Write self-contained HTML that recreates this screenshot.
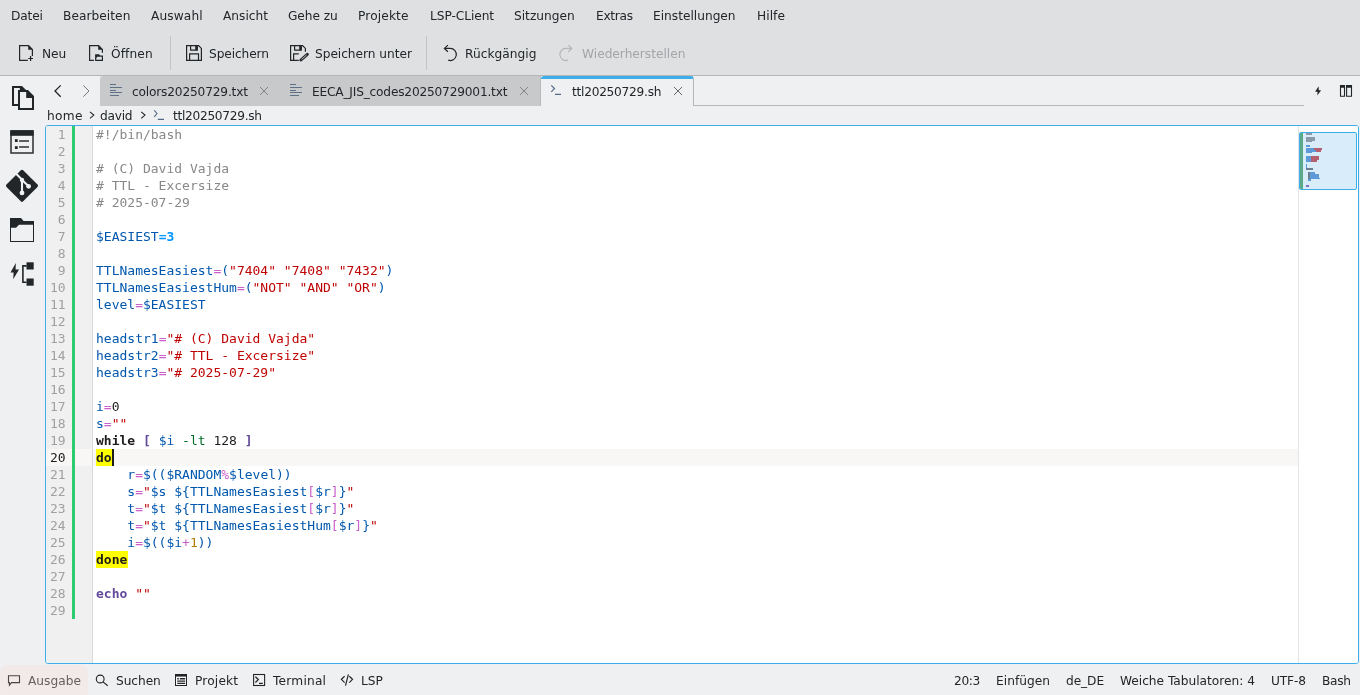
<!DOCTYPE html>
<html lang="de"><head><meta charset="utf-8"><title>ttl20250729.sh — Kate</title>
<style>
*{box-sizing:border-box;margin:0;padding:0}
html,body{width:1360px;height:695px;overflow:hidden;background:#eff0f1;font-family:"DejaVu Sans", "Liberation Sans", sans-serif;font-size:12.2px;color:#232629}
#top{position:absolute;left:0;top:0;width:1360px;height:75px;background:#dee0e2}
#topline{position:absolute;left:0;top:75px;width:1360px;height:1px;background:#b3b5b7}
.u{will-change:transform;position:absolute;white-space:pre;line-height:20px;height:20px;color:#232629}
.u.dis{color:#a3a5a7}
.u.dim{color:#66625f}
.sep{position:absolute;width:1px;background:#c2c4c6}
#tab1{position:absolute;left:100px;top:76px;width:441px;height:30px;background:#c8c9cb;border-top-left-radius:3px;border-right:1px solid #b9babc}
#tabact{position:absolute;left:541px;top:76px;width:153px;height:30px;background:#eff0f1;border-top:3px solid #3daee9;border-right:1px solid #b4b6b8;border-top-left-radius:3px;border-top-right-radius:3px}
#tabline{position:absolute;left:693px;top:105px;width:611px;height:1px;background:#b4b6b8}
#ed{position:absolute;left:45px;top:125px;width:1314px;height:539px;border:1px solid #3daee9;border-radius:3px;background:#fff;overflow:hidden}
#gut{position:absolute;left:0;top:0;width:46px;height:100%;background:#f0f0f0}
#curln{position:absolute;left:0;top:323px;width:1252px;height:17px;background:#f8f7f6}
#gsep{position:absolute;left:46px;top:0;width:1px;height:100%;background:#d5d5d5;opacity:.9}
#saved{position:absolute;left:26px;top:0;width:3px;height:493px;background:#2ecc71}
.hl{position:absolute;background:#ffff00;height:17px;left:50px}
#lines{will-change:transform;position:absolute;left:0;top:0;width:1252px}
.ln{position:relative;height:17px;line-height:17px;font-family:"DejaVu Sans Mono", "Liberation Mono", monospace;font-size:13px;white-space:pre}
.no{position:absolute;left:0;width:19.7px;text-align:right;color:#a0a0a0}
.ln.cur .no{color:#1e1e1e}
.tx{position:absolute;left:50px;height:17px;color:#1f1c1b}
.c{color:#898887}.v{color:#0057ae}.o{color:#ca60ca}.s{color:#bf0303}.k{font-weight:bold;color:#1f1c1b}
.kh{font-weight:bold;color:#1f1c1b}
.b{color:#644a9b;font-weight:bold}.p{color:#006e28}.d{color:#b08000}.x{color:#0095ff;font-weight:bold}.n{color:#1f1c1b}
#caret{position:absolute;left:66px;top:323px;width:2px;height:17px;background:#1f1c1b}
#mm{position:absolute;left:1252px;top:0;width:60px;height:100%;background:#fff;border-left:1px solid #e4e4e4}
#mmsl{position:absolute;left:0;top:6px;width:58px;height:58px;border:1px solid #3daee9;border-radius:2px;background:#d8ecf9;overflow:hidden}
#mmsl i{position:absolute;display:block}
#outbtn{position:absolute;left:0;top:665px;width:88px;height:34px;background:#f1eae8;border-radius:7px}
svg{position:absolute;overflow:visible}
</style></head><body>
<div id="top"></div><div id="topline"></div>
<div class="sep" style="left:170px;top:36px;height:34px"></div>
<div class="sep" style="left:426px;top:36px;height:34px"></div>
<div id="tab1"></div>
<div id="tabact"></div><div id="tabline"></div>
<div id="outbtn"></div>
<span class="u " style="left:10.5px;top:6px;letter-spacing:-0.158px">Datei</span>
<span class="u " style="left:63.4px;top:6px;letter-spacing:0.048px">Bearbeiten</span>
<span class="u " style="left:151.1px;top:6px;letter-spacing:0.122px">Auswahl</span>
<span class="u " style="left:222.9px;top:6px;letter-spacing:0.014px">Ansicht</span>
<span class="u " style="left:288.1px;top:6px;letter-spacing:-0.079px">Gehe zu</span>
<span class="u " style="left:358.2px;top:6px;letter-spacing:0.134px">Projekte</span>
<span class="u " style="left:429.5px;top:6px;letter-spacing:-0.067px">LSP-CLient</span>
<span class="u " style="left:514.1px;top:6px;letter-spacing:-0.002px">Sitzungen</span>
<span class="u " style="left:595.6px;top:6px;letter-spacing:-0.306px">Extras</span>
<span class="u " style="left:653.1px;top:6px;letter-spacing:-0.002px">Einstellungen</span>
<span class="u " style="left:756.5px;top:6px;letter-spacing:0.041px">Hilfe</span>
<span class="u " style="left:41.6px;top:44px;letter-spacing:-0.047px">Neu</span>
<span class="u " style="left:111.4px;top:44px;letter-spacing:0.113px">Öffnen</span>
<span class="u " style="left:209.4px;top:44px;letter-spacing:-0.102px">Speichern</span>
<span class="u " style="left:314.5px;top:44px;letter-spacing:-0.037px">Speichern unter</span>
<span class="u " style="left:465.2px;top:44px;letter-spacing:0.033px">Rückgängig</span>
<span class="u dis" style="left:581.6px;top:44px;letter-spacing:-0.011px">Wiederherstellen</span>
<span class="u " style="left:131.9px;top:82px;letter-spacing:-0.179px">colors20250729.txt</span>
<span class="u " style="left:312.4px;top:82px;letter-spacing:-0.198px">EECA_JIS_codes20250729001.txt</span>
<span class="u " style="left:571.9px;top:82px;letter-spacing:-0.264px">ttl20250729.sh</span>
<span class="u " style="left:46.9px;top:106px;letter-spacing:0.312px">home</span>
<span class="u " style="left:100.4px;top:106px;letter-spacing:-0.262px">david</span>
<span class="u " style="left:173.4px;top:106px;letter-spacing:-0.303px">ttl20250729.sh</span>
<span class="u dim" style="left:28.4px;top:671px;letter-spacing:0.023px">Ausgabe</span>
<span class="u " style="left:115.9px;top:671px;letter-spacing:-0.062px">Suchen</span>
<span class="u " style="left:194.9px;top:671px;letter-spacing:0.173px">Projekt</span>
<span class="u " style="left:273.4px;top:671px;letter-spacing:0.212px">Terminal</span>
<span class="u " style="left:360.9px;top:671px;letter-spacing:0.005px">LSP</span>
<span class="u " style="left:953.9px;top:671px;letter-spacing:-0.358px">20:3</span>
<span class="u " style="left:995.9px;top:671px;letter-spacing:0.029px">Einfügen</span>
<span class="u " style="left:1065.9px;top:671px;letter-spacing:-0.080px">de_DE</span>
<span class="u " style="left:1119.9px;top:671px;letter-spacing:-0.014px">Weiche Tabulatoren: 4</span>
<span class="u " style="left:1270.9px;top:671px;letter-spacing:-0.133px">UTF-8</span>
<span class="u " style="left:1322.3px;top:671px;letter-spacing:-0.269px">Bash</span>
<div id="ed">
 <div id="gut"></div><div id="curln"></div><div id="gsep"></div><div id="saved"></div>
 <div class="hl" style="top:323px;width:16px"></div><div class="hl" style="top:425px;width:32px"></div>
 <div id="lines">
<div class="ln"><span class="no">1</span><span class="tx"><span class="c">#!/bin/bash</span></span></div>
<div class="ln"><span class="no">2</span><span class="tx"></span></div>
<div class="ln"><span class="no">3</span><span class="tx"><span class="c"># (C) David Vajda</span></span></div>
<div class="ln"><span class="no">4</span><span class="tx"><span class="c"># TTL - Excersize</span></span></div>
<div class="ln"><span class="no">5</span><span class="tx"><span class="c"># 2025-07-29</span></span></div>
<div class="ln"><span class="no">6</span><span class="tx"></span></div>
<div class="ln"><span class="no">7</span><span class="tx"><span class="v">$EASIEST</span><span class="x">=3</span></span></div>
<div class="ln"><span class="no">8</span><span class="tx"></span></div>
<div class="ln"><span class="no">9</span><span class="tx"><span class="v">TTLNamesEasiest</span><span class="o">=</span><span class="v">(</span><span class="s">&quot;7404&quot; &quot;7408&quot; &quot;7432&quot;</span><span class="v">)</span></span></div>
<div class="ln"><span class="no">10</span><span class="tx"><span class="v">TTLNamesEasiestHum</span><span class="o">=</span><span class="v">(</span><span class="s">&quot;NOT&quot; &quot;AND&quot; &quot;OR&quot;</span><span class="v">)</span></span></div>
<div class="ln"><span class="no">11</span><span class="tx"><span class="v">level</span><span class="o">=</span><span class="v">$EASIEST</span></span></div>
<div class="ln"><span class="no">12</span><span class="tx"></span></div>
<div class="ln"><span class="no">13</span><span class="tx"><span class="v">headstr1</span><span class="o">=</span><span class="s">&quot;# (C) David Vajda&quot;</span></span></div>
<div class="ln"><span class="no">14</span><span class="tx"><span class="v">headstr2</span><span class="o">=</span><span class="s">&quot;# TTL - Excersize&quot;</span></span></div>
<div class="ln"><span class="no">15</span><span class="tx"><span class="v">headstr3</span><span class="o">=</span><span class="s">&quot;# 2025-07-29&quot;</span></span></div>
<div class="ln"><span class="no">16</span><span class="tx"></span></div>
<div class="ln"><span class="no">17</span><span class="tx"><span class="v">i</span><span class="o">=</span><span class="n">0</span></span></div>
<div class="ln"><span class="no">18</span><span class="tx"><span class="v">s</span><span class="o">=</span><span class="s">&quot;&quot;</span></span></div>
<div class="ln"><span class="no">19</span><span class="tx"><span class="k">while</span><span class="n"> </span><span class="b">[</span><span class="n"> </span><span class="v">$i</span><span class="n"> </span><span class="p">-lt</span><span class="n"> 128 </span><span class="b">]</span></span></div>
<div class="ln cur"><span class="no">20</span><span class="tx"><span class="kh">do</span></span></div>
<div class="ln"><span class="no">21</span><span class="tx"><span class="n">    </span><span class="v">r</span><span class="o">=</span><span class="v">$(($RANDOM</span><span class="o">%</span><span class="v">$level))</span></span></div>
<div class="ln"><span class="no">22</span><span class="tx"><span class="n">    </span><span class="v">s</span><span class="o">=</span><span class="s">&quot;</span><span class="v">$s ${TTLNamesEasiest</span><span class="o">[</span><span class="v">$r</span><span class="o">]</span><span class="v">}</span><span class="s">&quot;</span></span></div>
<div class="ln"><span class="no">23</span><span class="tx"><span class="n">    </span><span class="v">t</span><span class="o">=</span><span class="s">&quot;</span><span class="v">$t ${TTLNamesEasiest</span><span class="o">[</span><span class="v">$r</span><span class="o">]</span><span class="v">}</span><span class="s">&quot;</span></span></div>
<div class="ln"><span class="no">24</span><span class="tx"><span class="n">    </span><span class="v">t</span><span class="o">=</span><span class="s">&quot;</span><span class="v">$t ${TTLNamesEasiestHum</span><span class="o">[</span><span class="v">$r</span><span class="o">]</span><span class="v">}</span><span class="s">&quot;</span></span></div>
<div class="ln"><span class="no">25</span><span class="tx"><span class="n">    </span><span class="v">i</span><span class="o">=</span><span class="v">$(($i</span><span class="o">+</span><span class="d">1</span><span class="v">))</span></span></div>
<div class="ln"><span class="no">26</span><span class="tx"><span class="kh">done</span></span></div>
<div class="ln"><span class="no">27</span><span class="tx"></span></div>
<div class="ln"><span class="no">28</span><span class="tx"><span class="b">echo</span><span class="n"> </span><span class="s">&quot;&quot;</span></span></div>
<div class="ln"><span class="no">29</span><span class="tx"></span></div>
 </div>
 <div id="caret"></div>
 <div id="mm"><div id="mmsl"><i style="left:0.0px;top:-1.0px;width:3.0px;height:59.0px;background:#5aa98b"></i><i style="left:6.0px;top:0.2px;width:6.0px;height:1.6px;background:#8a9aa6"></i><i style="left:6.0px;top:4.3px;width:9.0px;height:3.5px;background:#8a9aa6"></i><i style="left:6.0px;top:7.8px;width:6.2px;height:1.7px;background:#8a9aa6"></i><i style="left:6.0px;top:12.3px;width:4.0px;height:1.7px;background:#5f9ad8"></i><i style="left:6.0px;top:15.2px;width:8.0px;height:3.4px;background:#5f9ad8"></i><i style="left:14.0px;top:15.2px;width:8.0px;height:1.8px;background:#b4606f"></i><i style="left:14.0px;top:17.0px;width:2.0px;height:1.6px;background:#5f9ad8"></i><i style="left:16.0px;top:17.0px;width:5.0px;height:1.6px;background:#b4606f"></i><i style="left:6.0px;top:18.6px;width:6.0px;height:1.8px;background:#5f9ad8"></i><i style="left:6.0px;top:23.3px;width:4.5px;height:5.4px;background:#5f9ad8"></i><i style="left:10.5px;top:23.3px;width:8.5px;height:3.7px;background:#b4606f"></i><i style="left:10.5px;top:27.0px;width:6.5px;height:1.7px;background:#b4606f"></i><i style="left:6.0px;top:31.3px;width:1.0px;height:3.7px;background:#5f9ad8"></i><i style="left:6.0px;top:35.0px;width:7.0px;height:1.8px;background:#6c7f90"></i><i style="left:8.2px;top:39.4px;width:6.8px;height:1.8px;background:#5f9ad8"></i><i style="left:8.2px;top:41.2px;width:10.8px;height:3.4px;background:#5f9ad8"></i><i style="left:8.2px;top:44.6px;width:11.8px;height:1.6px;background:#5f9ad8"></i><i style="left:8.2px;top:46.2px;width:2.8px;height:1.7px;background:#5f9ad8"></i><i style="left:8.2px;top:39.4px;width:1.8px;height:6.8px;background:#6c7f90"></i><i style="left:6.0px;top:52.0px;width:3.0px;height:1.8px;background:#7f6fc0"></i></div></div>
</div>
<svg id="ic" width="1360" height="695" viewBox="0 0 1360 695" style="left:0;top:0" fill="none" stroke="#232629" stroke-width="1.2" stroke-linecap="butt" stroke-linejoin="miter">
<!-- toolbar: new -->
<path d="M27.8 60.4H19.6V45.6H28.6L32.4 49.4V55.9"/>
<path d="M28.2 45.4V49.7H32.8Z" fill="#232629" stroke="none"/>
<path d="M28.2 58.5H33M30.6 56.1V61"/>
<!-- toolbar: open -->
<path d="M93.9 60.4H89.6V45.6H98.6L102.4 49.4V52.8"/>
<path d="M98.2 45.4V49.7H102.8Z" fill="#232629" stroke="none"/>
<path d="M95.1 54.2H98.9L100.3 55.5H103V61H95.1ZM96.3 59.8V57.9L97.4 56.8H101.8V59.8Z" fill="#232629" fill-rule="evenodd" stroke="none"/>
<!-- toolbar: save -->
<path d="M186.6 45.6H198.6L201.4 48.4V60.4H186.6Z"/>
<path d="M190.6 45.6V50.1H197.2V45.6"/>
<rect x="195.2" y="45.6" width="2.5" height="4.6" fill="#232629" stroke="none"/>
<path d="M189.6 60.4V53.8H198.5V60.4"/>
<!-- toolbar: save as -->
<path d="M298.8 60.4H290.6V45.6H302.6L305.4 48.4V51.7"/>
<path d="M294.6 45.6V50.1H301.2V45.6"/>
<rect x="299.2" y="45.6" width="2.5" height="4.6" fill="#232629" stroke="none"/>
<path d="M298.8 53.8H293.6V60.4"/>
<path d="M300.9 60L307.3 54.3" stroke-width="3" stroke-linecap="round"/>
<path d="M301.6 59.4L306.6 54.9" stroke="#dee0e2" stroke-width="0.8"/>
<!-- undo / redo -->
<path d="M447.9 45.1L444.4 48.4L447.9 51.7M444.4 48.4H450.3A6.05 6.05 0 1 1 448.23 60.14"/>
<path d="M568.3 45.1L571.8 48.4L568.3 51.7M571.8 48.4H565.9A6.05 6.05 0 1 0 567.97 60.14" stroke="#b4b6b8"/>
<!-- sidebar: documents -->
<path d="M12 86H22L26 90H28L34 96V110H18V106H12ZM14 88V104H18V90.1H19.8V88ZM20 92V108H32V98H26.2V92Z" fill="#232629" fill-rule="evenodd" stroke="none"/>
<!-- sidebar: outline -->
<rect x="11" y="131" width="22" height="22" stroke-width="1.5" stroke="#2c2f32"/>
<rect x="10.3" y="130.3" width="23.3" height="5.5" fill="#232629" stroke="none"/>
<rect x="14.9" y="139.2" width="2.8" height="2.8" fill="#232629" stroke="none"/>
<rect x="14.9" y="146.2" width="2.8" height="2.8" fill="#232629" stroke="none"/>
<path d="M19.1 141.1H29M19.1 147.1H29" stroke-width="1.5" stroke="#2c2f32"/>
<!-- sidebar: git -->
<rect x="-11.8" y="-11.8" width="23.6" height="23.6" rx="1.7" transform="translate(22 185.8) rotate(45)" fill="#232629" stroke="none"/>
<path d="M16.2 173.7L22 179.6V192.9M22.6 180.6L28.6 186.3" stroke="#eff0f1" stroke-width="2.1"/>
<circle cx="22" cy="180" r="2.2" fill="#eff0f1" stroke="none"/>
<circle cx="28.6" cy="186.3" r="2.4" fill="#eff0f1" stroke="none"/>
<circle cx="22" cy="192.9" r="2.4" fill="#eff0f1" stroke="none"/>
<!-- sidebar: folder -->
<path d="M10 218H21L23.6 221H34V242H10ZM11 227.8V241H33V224.8H19L16 227.8Z" fill="#232629" fill-rule="evenodd" stroke="none"/>
<!-- sidebar: build -->
<path d="M15.8 263L10.5 272.4H13.6L13.2 279.3L19 269.5H15.6Z" fill="#232629" stroke="none"/>
<rect x="26.5" y="262.3" width="7.2" height="7.2" fill="#232629" stroke="none"/>
<rect x="26.5" y="278.5" width="7.2" height="7.2" fill="#232629" stroke="none"/>
<path d="M26.5 265.9H22.9V282.2H26.5" stroke-width="1.6"/>
<!-- tab nav arrows -->
<path d="M60.7 85.4L55 91L60.7 96.7" stroke-width="1.3"/>
<path d="M83.3 85.4L89 91L83.3 96.7" stroke="#75777a" stroke-width="1"/>
<!-- tab icons -->
<path d="M110 84.5H116M110 87.5H122M110 90.5H116M110 92.5H122M110 95.5H119" stroke="#5e7187" stroke-width="1"/>
<path d="M290 84.5H296M290 87.5H302M290 90.5H296M290 92.5H302M290 95.5H299" stroke="#5e7187" stroke-width="1"/>
<path d="M551.3 85.3L554.5 88.5L551.3 91.8M555 94.3H561" stroke="#54698a" stroke-width="1.2"/>
<!-- tab close -->
<path d="M260 87L268 95M268 87L260 95" stroke="#7a7c7f" stroke-width="0.9"/>
<path d="M520 87L528 95M528 87L520 95" stroke="#7a7c7f" stroke-width="0.9"/>
<path d="M674 87L682 95M682 87L674 95" stroke="#55585b" stroke-width="0.9"/>
<!-- right icons -->
<path d="M1318.6 86.3L1315.1 91.8H1317.6L1317.3 95.6L1321.1 90.3H1318.8Z" fill="#232629" stroke="none"/>
<path d="M1340.5 85.5H1344.5V96.3H1340.5ZM1346.6 85.5H1351.5V96.3H1346.6Z" stroke-width="1.1"/>
<path d="M1340 85H1345V87.8H1340ZM1346.1 85H1352V87.8H1346.1Z" fill="#232629" stroke="none"/>
<!-- breadcrumb -->
<path d="M90 111.8L93.8 115.1L90 118.4M141.2 111.8L145 115.1L141.2 118.4" stroke-width="1.1"/>
<path d="M154.2 110.3L157 113.5L154.2 116.8M157.8 119.4H164" stroke="#54698a" stroke-width="1.1"/>
<!-- status icons -->
<path d="M8.5 675.8H19.5V682.6H11.5L9.4 685.2V682.6H8.5Z" stroke="#4a4543" stroke-width="1.1"/>
<circle cx="100.2" cy="679" r="3.9" stroke-width="1.1"/>
<path d="M103 681.9L107.7 685.7" stroke-width="1.2"/>
<rect x="175.5" y="674.5" width="11" height="11" stroke-width="1" fill="#fbfbfb"/>
<rect x="175" y="674" width="12" height="2.6" fill="#232629" stroke="none"/>
<path d="M177.2 678.7H178.8M179.8 678.7H185.2M177.2 681.1H185.2M177.2 683.4H185.2" stroke-width="1.35"/>
<rect x="253.6" y="674.5" width="11" height="11" stroke-width="1.1"/>
<path d="M255.4 676.7L258.3 679.6L255.4 682.5M259 683.4H262.8" stroke-width="1.3"/>
<path d="M344.6 676.2L341.4 679.3L344.6 682.6M349.3 676.2L352.5 679.3L349.3 682.6M348.4 674.4L345.5 685.6" stroke-width="1.2"/>
</svg>

</body></html>
